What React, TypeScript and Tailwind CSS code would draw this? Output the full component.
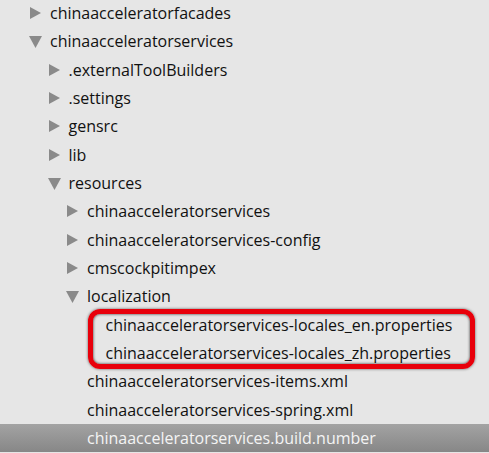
import React from 'react';

type Node = { label: string; depth: number; arrow?: 'right' | 'down'; selected?: boolean };

const rows: Node[] = [
  { label: 'chinaacceleratorfacades', depth: 0, arrow: 'right' },
  { label: 'chinaacceleratorservices', depth: 0, arrow: 'down' },
  { label: '.externalToolBuilders', depth: 1, arrow: 'right' },
  { label: '.settings', depth: 1, arrow: 'right' },
  { label: 'gensrc', depth: 1, arrow: 'right' },
  { label: 'lib', depth: 1, arrow: 'right' },
  { label: 'resources', depth: 1, arrow: 'down' },
  { label: 'chinaacceleratorservices', depth: 2, arrow: 'right' },
  { label: 'chinaacceleratorservices-config', depth: 2, arrow: 'right' },
  { label: 'cmscockpitimpex', depth: 2, arrow: 'right' },
  { label: 'localization', depth: 2, arrow: 'down' },
  { label: 'chinaacceleratorservices-locales_en.properties', depth: 3 },
  { label: 'chinaacceleratorservices-locales_zh.properties', depth: 3 },
  { label: 'chinaacceleratorservices-items.xml', depth: 2 },
  { label: 'chinaacceleratorservices-spring.xml', depth: 2 },
  { label: 'chinaacceleratorservices.build.number', depth: 2, selected: true },
];

const Arrow = ({ dir }: { dir: 'right' | 'down' }) => (
  <svg width="13" height="14" viewBox="0 0 13 14" className="shrink-0">
    {dir === 'right' ? (
      <polygon points="1,1 12,7 1,13" fill="#8a8a8a" />
    ) : (
      <polygon points="0,2 13,2 6.5,14" fill="#8a8a8a" />
    )}
  </svg>
);

const App: React.FC = () => {
  return (
    <div
      className="relative w-[489px] h-[453px] overflow-hidden bg-[#e6e6e6] text-[16px] text-[#111111]"
      style={{ fontFamily: '"Open Sans", "Noto Sans", sans-serif' }}
    >
      <div className="-mt-[1px]">
        {rows.map((r, i) => (
          <div
            key={i}
            className={`flex items-center h-[28.33px] ${
              r.selected ? 'bg-gradient-to-b from-[#a3a3a3] to-[#878787] text-[#f4f4f4]' : ''
            }`}
            style={{ paddingLeft: 29 + r.depth * 18.5 }}
          >
            <div className="w-[21px] flex items-center">{r.arrow && <Arrow dir={r.arrow} />}</div>
            <span className="whitespace-nowrap leading-none font-medium">{r.label}</span>
          </div>
        ))}
      </div>

      {/* annotation box */}
      <div className="absolute left-[88px] top-[309px] w-[387px] h-[60px] rounded-[12px] border-[5px] border-[#e8000b] shadow-[inset_0_0_3px_rgba(0,0,0,0.8),0_0_3px_rgba(0,0,0,0.6)]" />
    </div>
  );
};

export default App;
